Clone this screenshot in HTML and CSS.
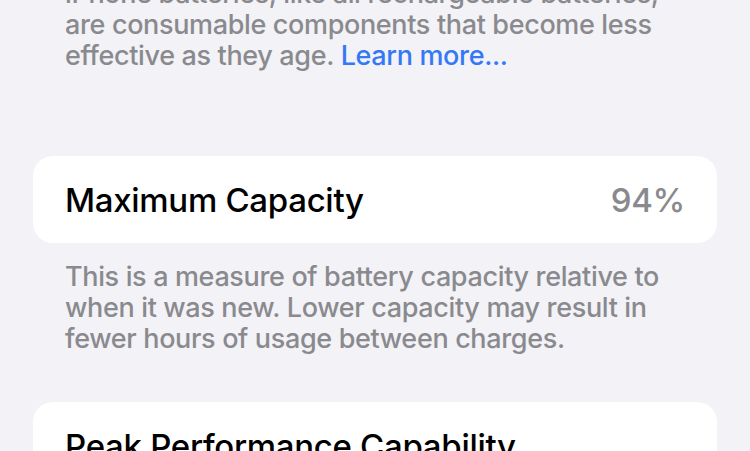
FILE: index.html
```html
<!DOCTYPE html>
<html lang="en">
<head>
<meta charset="utf-8">
<title>Battery Health</title>
<link rel="stylesheet" href="styles.css">
</head>
<body>
<main class="page">
  <p class="note note-top">iPhone batteries, like all rechargeable batteries, are consumable components that become less effective as they age. <a class="link" href="#">Learn more...</a></p>
  <section class="card">
    <span class="title">Maximum Capacity</span>
    <span class="value">94%</span>
  </section>
  <p class="note note-desc">This is a measure of battery capacity relative to when it was new. Lower capacity may result in fewer hours of usage between charges.</p>
  <section class="card card-tall">
    <span class="title">Peak Performance Capability</span>
  </section>
</main>
</body>
</html>
```

FILE: styles.css
```css
html, body {
  margin: 0;
  padding: 0;
  background: #f2f2f7;
  overflow: hidden;
}
body {
  font-family: Inter, "Noto Sans", "Liberation Sans", sans-serif;
  -webkit-font-smoothing: antialiased;
}
.page {
  padding: 0 33px;
  height: 451px;
  overflow: hidden;
}
.note {
  margin: 0;
  padding: 0 32px;
  font-size: 27px;
  line-height: 31px;
  font-weight: 500;
  letter-spacing: -0.35px;
  color: #8a8a8e;
}
.note-top {
  margin-top: -22px;
}
.link {
  color: #3478f6;
  text-decoration: none;
}
.card {
  background: #ffffff;
  border-radius: 20px;
  height: 87px;
  padding: 0 32px;
  display: flex;
  align-items: center;
  justify-content: space-between;
  margin-top: 85px;
}
.card-tall {
  margin-top: 48px;
  height: 120px;
  align-items: flex-start;
  padding-top: 24px;
  box-sizing: border-box;
}
.title {
  font-size: 33px;
  line-height: 40px;
  font-weight: 500;
  letter-spacing: -0.3px;
  color: #000;
}
.value {
  font-size: 33px;
  line-height: 40px;
  font-weight: 500;
  letter-spacing: -0.3px;
  color: #8a8a8e;
}
.note-desc {
  margin-top: 18px;
}
```
